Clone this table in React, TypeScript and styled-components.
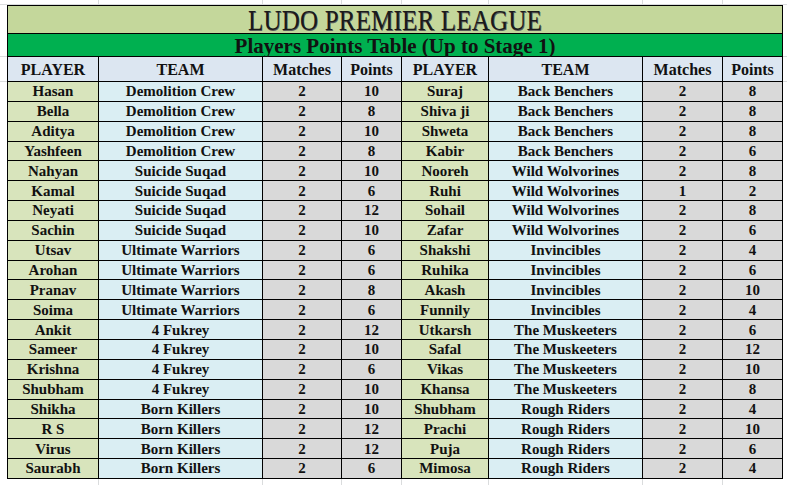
import React from 'react';
import styled, { createGlobalStyle } from 'styled-components';

const GlobalStyle = createGlobalStyle`
  html, body {
    margin: 0;
    padding: 0;
    background: #ffffff;
  }
`;

const GRID = '#dadcdd';

// excel gridlines behind the table, at the sheet's column/row boundaries
const Sheet = styled.div`
  width: 787px;
  height: 485px;
  overflow: hidden;
  box-sizing: border-box;
  padding: 5px 0 0 7px;
  background-color: #ffffff;
  background-image:
    linear-gradient(90deg,
      transparent 98px, ${GRID} 98px 99px,
      transparent 99px 262px, ${GRID} 262px 263px,
      transparent 263px 341px, ${GRID} 341px 342px,
      transparent 342px 401px, ${GRID} 401px 402px,
      transparent 402px 488px, ${GRID} 488px 489px,
      transparent 489px 642px, ${GRID} 642px 643px,
      transparent 643px 722px, ${GRID} 722px 723px,
      transparent 723px),
    linear-gradient(180deg,
      transparent 4px, ${GRID} 4px 5px,
      transparent 5px 56px, ${GRID} 56px 57px,
      transparent 57px 81px, ${GRID} 81px 82px,
      transparent 82px);
  font-family: 'Liberation Serif', 'Times New Roman', serif;
  color: #111111;
`;

const Table = styled.div`
  display: grid;
  grid-template-columns: 91px 164px 79px 60px 87px 154px 80px 60px;
  grid-template-rows: 28px 23px 25px repeat(20, 19.85px);
  width: max-content;
  border-left: 1px solid #000;
  border-top: 1px solid #000;
`;

const TitleCell = styled.div`
  grid-column: 1 / -1;
  display: flex;
  align-items: center;
  justify-content: center;
  background: #c4d79b;
  border-right: 1px solid #000;
  border-bottom: 1px solid #000;
  padding-top: 2px;
`;

const TitleText = styled.span`
  display: inline-block;
  font-size: 25px;
  line-height: 21px;
  letter-spacing: 0.2px;
  color: #1a1a1a;
  text-shadow: 0.6px 0.6px 0 #5a5a5a;
  transform: scaleY(1.15);
`;

const SubTitleCell = styled.div`
  grid-column: 1 / -1;
  display: flex;
  align-items: center;
  justify-content: center;
  background: #00b050;
  border-right: 1px solid #000;
  border-bottom: 1px solid #000;
  font-size: 21px;
  line-height: 22px;
  font-weight: bold;
  padding-top: 1px;
`;

const HeadCell = styled.div`
  display: flex;
  align-items: center;
  justify-content: center;
  background: #dce6f1;
  border-right: 1px solid #000;
  border-bottom: 1px solid #000;
  font-size: 16px;
  font-weight: bold;
  padding-top: 2px;
`;

const fills = {
  player: '#d8e4bc',
  team: '#daeef3',
  num: '#d9d9d9',
};

const Cell = styled.div<{ $kind: keyof typeof fills }>`
  display: flex;
  align-items: center;
  justify-content: center;
  background: ${(p) => fills[p.$kind]};
  border-right: 1px solid #000;
  border-bottom: 1px solid #000;
  font-size: 15px;
  font-weight: bold;
  padding-top: 1px;
  white-space: nowrap;
`;

type Row = [string, string, number, number];

const left: Row[] = [
  ['Hasan', 'Demolition Crew', 2, 10],
  ['Bella', 'Demolition Crew', 2, 8],
  ['Aditya', 'Demolition Crew', 2, 10],
  ['Yashfeen', 'Demolition Crew', 2, 8],
  ['Nahyan', 'Suicide Suqad', 2, 10],
  ['Kamal', 'Suicide Suqad', 2, 6],
  ['Neyati', 'Suicide Suqad', 2, 12],
  ['Sachin', 'Suicide Suqad', 2, 10],
  ['Utsav', 'Ultimate Warriors', 2, 6],
  ['Arohan', 'Ultimate Warriors', 2, 6],
  ['Pranav', 'Ultimate Warriors', 2, 8],
  ['Soima', 'Ultimate Warriors', 2, 6],
  ['Ankit', '4 Fukrey', 2, 12],
  ['Sameer', '4 Fukrey', 2, 10],
  ['Krishna', '4 Fukrey', 2, 6],
  ['Shubham', '4 Fukrey', 2, 10],
  ['Shikha', 'Born Killers', 2, 10],
  ['R S', 'Born Killers', 2, 12],
  ['Virus', 'Born Killers', 2, 12],
  ['Saurabh', 'Born Killers', 2, 6],
];

const right: Row[] = [
  ['Suraj', 'Back Benchers', 2, 8],
  ['Shiva ji', 'Back Benchers', 2, 8],
  ['Shweta', 'Back Benchers', 2, 8],
  ['Kabir', 'Back Benchers', 2, 6],
  ['Nooreh', 'Wild Wolvorines', 2, 8],
  ['Ruhi', 'Wild Wolvorines', 1, 2],
  ['Sohail', 'Wild Wolvorines', 2, 8],
  ['Zafar', 'Wild Wolvorines', 2, 6],
  ['Shakshi', 'Invincibles', 2, 4],
  ['Ruhika', 'Invincibles', 2, 6],
  ['Akash', 'Invincibles', 2, 10],
  ['Funnily', 'Invincibles', 2, 4],
  ['Utkarsh', 'The Muskeeters', 2, 6],
  ['Safal', 'The Muskeeters', 2, 12],
  ['Vikas', 'The Muskeeters', 2, 10],
  ['Khansa', 'The Muskeeters', 2, 8],
  ['Shubham', 'Rough Riders', 2, 4],
  ['Prachi', 'Rough Riders', 2, 10],
  ['Puja', 'Rough Riders', 2, 6],
  ['Mimosa', 'Rough Riders', 2, 4],
];

const headers = ['PLAYER', 'TEAM', 'Matches', 'Points', 'PLAYER', 'TEAM', 'Matches', 'Points'];

const renderHalf = (r: Row, key: string) => (
  <React.Fragment key={key}>
    <Cell $kind="player">{r[0]}</Cell>
    <Cell $kind="team">{r[1]}</Cell>
    <Cell $kind="num">{r[2]}</Cell>
    <Cell $kind="num">{r[3]}</Cell>
  </React.Fragment>
);

const App = () => {
  return (
    <>
      <GlobalStyle />
      <Sheet>
        <Table>
          <TitleCell>
            <TitleText>LUDO PREMIER LEAGUE</TitleText>
          </TitleCell>
          <SubTitleCell>Players Points Table (Up to Stage 1)</SubTitleCell>
          {headers.map((h, i) => (
            <HeadCell key={i}>{h}</HeadCell>
          ))}
          {left.map((r, i) => (
            <React.Fragment key={i}>
              {renderHalf(r, 'l' + i)}
              {renderHalf(right[i], 'r' + i)}
            </React.Fragment>
          ))}
        </Table>
      </Sheet>
    </>
  );
};

export default App;
